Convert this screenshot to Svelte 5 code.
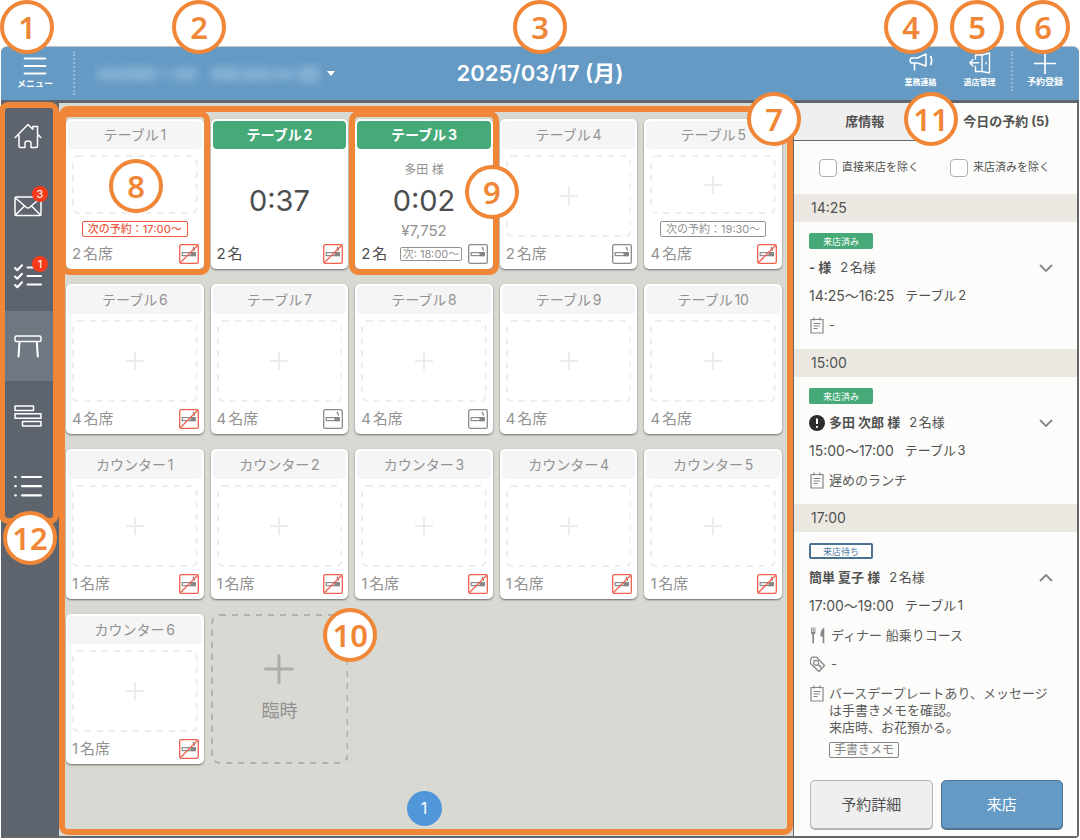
<script>
  const seats = [
    { name: 'テーブル1', label: '2名席', smoke: 'no', next: '次の予約：17:00〜', urgent: true, mark: 8 },
    { name: 'テーブル2', label: '2名', smoke: 'no', time: '0:37' },
    { name: 'テーブル3', label: '2名', smoke: 'yes', time: '0:02', guest: '多田 様', price: '¥7,752', after: '次: 18:00〜', mark: 9 },
    { name: 'テーブル4', label: '2名席', smoke: 'yes' },
    { name: 'テーブル5', label: '4名席', smoke: 'no', next: '次の予約：19:30〜' },
    { name: 'テーブル6', label: '4名席', smoke: 'no' },
    { name: 'テーブル7', label: '4名席', smoke: 'yes' },
    { name: 'テーブル8', label: '4名席', smoke: 'yes' },
    { name: 'テーブル9', label: '4名席' },
    { name: 'テーブル10', label: '4名席' },
    { name: 'カウンター1', label: '1名席', smoke: 'no' },
    { name: 'カウンター2', label: '1名席', smoke: 'no' },
    { name: 'カウンター3', label: '1名席', smoke: 'no' },
    { name: 'カウンター4', label: '1名席', smoke: 'no' },
    { name: 'カウンター5', label: '1名席', smoke: 'no' },
    { name: 'カウンター6', label: '1名席', smoke: 'no' }
  ];

  const bookings = [
    { at: '14:25', status: '来店済み', done: true, name: '- 様', party: '2名様', span: '14:25〜16:25', seat: 'テーブル2', memo: ['-'] },
    { at: '15:00', status: '来店済み', done: true, alert: true, name: '多田 次郎 様', party: '2名様', span: '15:00〜17:00', seat: 'テーブル3', memo: ['遅めのランチ'] },
    {
      at: '17:00', status: '来店待ち', open: true, name: '簡単 夏子 様', party: '2名様', span: '17:00〜19:00', seat: 'テーブル1',
      course: 'ディナー 船乗りコース', tag: '-',
      memo: ['バースデープレートあり、メッセージは手書きメモを確認。', '来店時、お花預かる。'], note: '手書きメモ'
    }
  ];

  const nav = [
    { icon: 'home' },
    { icon: 'mail', count: 3 },
    { icon: 'tasks', count: 1 },
    { icon: 'table', active: true },
    { icon: 'timeline' },
    { icon: 'list' }
  ];
</script>

{#snippet mark(n, cls)}
  <span class="mark {cls}">{n}</span>
{/snippet}

{#snippet smokeIcon(kind)}
  <svg class="smoke" viewBox="0 0 20 20" fill="none">
    <rect x="3.2" y="8.6" width="13" height="3" stroke="#8b8b8b" stroke-width="1.2" />
    <rect x="11.5" y="8" width="5.3" height="4.2" fill="#858585" />
    <path d="M14.9 2.9c-1 .8-.8 1.3 0 1.8s.6 1.3.1 2" stroke="#858585" stroke-width="1.2" />
    {#if kind === 'no'}
      <path d="M1 19 19 1" stroke="#f0604d" stroke-width="1.3" />
    {/if}
    <rect x=".7" y=".7" width="18.6" height="18.6" rx="1.6" stroke={kind === 'no' ? '#f0604d' : '#8b8b8b'} stroke-width="1.3" />
  </svg>
{/snippet}

{#snippet noteIcon()}
  <svg class="ic" viewBox="0 0 16 17" fill="none" stroke="#858585">
    <path d="M2 2.5h12v13.500H2zM5 .5v3M11 .5v3M4.500 6.500h7M4.500 9h6.500M4.500 11.500h4" stroke-width="1.200" />
  </svg>
{/snippet}

<div class="page">
  <div class="app">
    <header>
      <div class="left">
        <button class="menu">
          <svg width="24" height="19" viewBox="0 0 24 19"><path d="M1.500 1.500h21M1.500 9h21M1.500 16.500h21" stroke="#fff" stroke-width="1.800" stroke-linecap="round" /></svg>
          <span>メニュー</span>
        </button>
        <button class="store" aria-label="店舗">
          <svg width="230" height="24" viewBox="0 0 230 24">
            <defs><filter id="soft" x="-10%" y="-60%" width="120%" height="220%"><feGaussianBlur stdDeviation="4" /></filter></defs>
            <g filter="url(#soft)" fill="#93bbda" opacity=".7">
              <rect x="4" y="6" width="26" height="12" /><rect x="31" y="5" width="32" height="14" />
              <rect x="68" y="9" width="8" height="7" /><rect x="80" y="6" width="24" height="12" />
              <rect x="118" y="5" width="28" height="14" /><rect x="148" y="6" width="28" height="13" />
              <rect x="178" y="7" width="24" height="10" /><rect x="206" y="4" width="20" height="17" />
            </g>
          </svg>
          <svg width="8" height="5" viewBox="0 0 8 5"><path d="M0 0h8L4 5z" fill="#fff" /></svg>
        </button>
      </div>
      <h1>2025/03/17 (月)</h1>
      <div class="right">
        <button class="tool">
          <svg width="24" height="22" viewBox="0 0 24 22" fill="none" stroke="#fff" stroke-width="1.500" stroke-linejoin="round" stroke-linecap="round">
            <path d="M2 6h6.500L17 2v12L8.500 11H2L.9 8.500zM5.500 11v7" />
            <path d="M21.800 4.500c1 2.500 1 5.500 0 8" stroke-width="1.800" />
          </svg>
          <span>業務連絡</span>
        </button>
        <button class="tool exit">
          <svg width="24" height="22" viewBox="0 0 24 22" fill="none" stroke="#fff" stroke-width="1.400" stroke-linejoin="round" stroke-linecap="round">
            <path d="M14 3 21.500 1v20L14 19.500zM14 3H7.500v4M7.500 14.500v5H14M10.500 10.700H2M5 7.500 1.800 10.700 5 13.900M18 10.500v1.200" />
          </svg>
          <span>退店管理</span>
        </button>
        <button class="tool add">
          <svg width="24" height="22" viewBox="0 0 24 22"><path d="M1 11.500h22M12 0v22" stroke="#fff" stroke-width="1.700" /></svg>
          <span>予約登録</span>
        </button>
      </div>
      {@render mark(1, 'm1')}
      {@render mark(2, 'm2')}
      {@render mark(3, 'm3')}
      {@render mark(4, 'm4')}
      {@render mark(5, 'm5')}
      {@render mark(6, 'm6')}
    </header>

    <div class="body">
      <aside>
        <nav>
          {#each nav as item}
            <a href="#{item.icon}" class:active={item.active} aria-label={item.icon}>
              <svg width="28" height="28" viewBox="0 0 28 28" fill="none" stroke="#fff" stroke-width="1.500" stroke-linejoin="round" stroke-linecap="round">
                {#if item.icon === 'home'}
                  <path d="M1.200 15.500 14 2.500l4.800 4.700V4.500h4.700v7.500l3.300 3.500M5 13.500V24q0 1.500 1.500 1.500H11v-4.500q0-2 3-2t3 2v4.500h5q1.500 0 1.500-1.500V13.500" />
                {:else if item.icon === 'mail'}
                  <rect x="1" y="5" width="26" height="18.500" rx="1.200" />
                  <path d="M1.500 6 12.500 15.500q1.500 1.200 3 0l11-9.500M1.500 23 10.500 14M26.500 23 17.500 14" />
                {:else if item.icon === 'tasks'}
                  <path d="m1 6 2.300 2.300 4.700-5M1 14.500l2.300 2.300 4.700-5M1 23l2.300 2.300 4.700-5" stroke-width="2" />
                  <path d="M13.500 5.500h13.500M13.500 14h13.500M13.500 22.500h13.500" stroke-width="2" />
                {:else if item.icon === 'table'}
                  <rect x="1" y="4" width="26" height="5.500" rx="1.500" />
                  <path d="M5.500 10 4.500 24.500M22.800 10l1 14.500" stroke-width="2" />
                {:else if item.icon === 'timeline'}
                  <path d="M1 4h18.500v4.500H1zM1 11.700h26v4.500H1zM8.500 19.500H27V24H8.500z" />
                {:else}
                  <path d="M8 5h19M8 14.200h19M8 23.300h19M1.200 5h.600M1.200 14.200h.600M1.200 23.300h.600" stroke-width="2.200" />
                {/if}
              </svg>
              {#if item.count}<span class="count">{item.count}</span>{/if}
            </a>
          {/each}
          <span class="frame nav-frame"></span>
          {@render mark(12, 'm12')}
        </nav>
      </aside>

      <main>
        <div class="grid">
          {#each seats as s}
            <article class:busy={s.time}>
              <h2>{s.name}</h2>
              {#if s.time}
                <div class="using">
                  <span class="guest">{s.guest ?? ''}</span>
                  <span class="timer">{s.time}</span>
                  <span class="price">{s.price ?? ''}</span>
                </div>
              {:else}
                <button class="slot" aria-label="{s.name}に案内">
                  <svg class="dash"><rect x="1" y="1" rx="5" /></svg>
                  {#if s.mark !== 8}
                    <svg class="plus" viewBox="0 0 18 18"><path d="M9 0v18M0 9h18" /></svg>
                  {/if}
                </button>
                {#if s.next}<span class="next" class:urgent={s.urgent}>{s.next}</span>{/if}
              {/if}
              <footer>
                <span class="cap">{s.label}</span>
                {#if s.after}<span class="after">{s.after}</span>{/if}
                {#if s.smoke}{@render smokeIcon(s.smoke)}{/if}
              </footer>
              {#if s.mark}
                <span class="frame card-frame"></span>
                {@render mark(s.mark, 'm' + s.mark)}
              {/if}
            </article>
          {/each}
          <button class="extra">
            <svg class="dash"><rect x="1" y="1" rx="8" /></svg>
            <svg width="30" height="30" viewBox="0 0 30 30"><path d="M15 1.500v27M1.500 15h27" stroke="#adadab" stroke-width="3" stroke-linecap="round" /></svg>
            <span>臨時</span>
            {@render mark(10, 'm10')}
          </button>
        </div>
        <button class="pager">1</button>
        <span class="frame main-frame"></span>
        {@render mark(7, 'm7')}
      </main>

      <section class="panel">
        <div class="tabs">
          <button>席情報</button>
          <button class="on">今日の予約 (5)</button>
          {@render mark(11, 'm11')}
        </div>
        <div class="filters">
          <label><input type="checkbox" />直接来店を除く</label>
          <label><input type="checkbox" />来店済みを除く</label>
        </div>
        {#each bookings as b}
          <h3>{b.at}</h3>
          <div class="entry">
            <span class="status" class:done={b.done}>{b.status}</span>
            <div class="who">
              {#if b.alert}
                <svg width="16" height="16" viewBox="0 0 16 16"><circle cx="8" cy="8" r="8" fill="#2d2d2d" /><path d="M8 3.500v5.500M8 11v1.800" stroke="#fff" stroke-width="2" /></svg>
              {/if}
              <strong>{b.name}</strong>
              <span>{b.party}</span>
              <button class="fold" aria-label={b.open ? '閉じる' : '開く'}>
                <svg width="14" height="8" viewBox="0 0 14 8" fill="none" stroke="#858585" stroke-width="1.800"><path d={b.open ? 'M1 7l6-6 6 6' : 'M1 1l6 6 6-6'} /></svg>
              </button>
            </div>
            <div class="when"><span class="span">{b.span}</span><span>{b.seat}</span></div>
            {#if b.course}
              <div class="line wide">
                <svg class="ic" viewBox="0 0 16 17" fill="#858585">
                  <path d="M2 .500h.900v4.500h.800V.500h1v4.500h.800V.500h.900v5q0 1.500-1.400 2v8.700H3.400V7.500Q2 7 2 5.500zM15.300.500v15.700h-1.600v-6.700h-2.300q-.200-7 3.900-9z" />
                </svg>
                <span>{b.course}</span>
              </div>
              <div class="line wide">
                <svg class="ic" viewBox="0 0 16 17" fill="none" stroke="#858585" stroke-width="1.200" stroke-linejoin="round">
                  <path d="M1.500 3.500 3 1.200 7.500 1l8 8.500-5.500 6-8.500-8z" /><circle cx="7.200" cy="6.800" r="2.500" /><path d="m9 8.600 3.400 3.400M10.700 10.300l1.200-1.200M4 3.600l.6.6" />
                </svg>
                <span>{b.tag}</span>
              </div>
            {/if}
            <div class="line">
              {@render noteIcon()}
              <div class="memo">
                {#each b.memo as m}<p>{m}</p>{/each}
                {#if b.note}<button class="note">{b.note}</button>{/if}
              </div>
            </div>
          </div>
        {/each}
        <div class="actions">
          <button>予約詳細</button>
          <button class="primary">来店</button>
        </div>
      </section>
    </div>
  </div>
</div>

<style>
  :global(body) {
    background: #fff;
  }
  .page, .page * {
    box-sizing: border-box;
  }
  .page {
    display: flex;
    flex-direction: column;
    min-height: 100vh;
    padding: 46px 1px 2px;
    font-family: Inter, "Noto Sans CJK JP", sans-serif;
    font-size: 13px;
    line-height: 17px;
    color: #525252;
    text-autospace: normal;
  }
  button {
    font: inherit;
    color: inherit;
    background: none;
    border: 0;
    padding: 0;
    margin: 0;
  }
  h1, h2, h3, p {
    margin: 0;
  }
  svg {
    display: block;
    flex: none;
  }

  .app {
    flex: 1;
    display: flex;
    flex-direction: column;
  }
  header {
    position: relative;
    z-index: 2;
    display: grid;
    grid-template-columns: 1fr auto 1fr;
    align-items: start;
    height: 57px;
    background: #649ac4;
    border-top: 1px solid #c4c4c4;
    border-bottom: 3px solid #5f666e;
    border-radius: 6px 6px 0 0;
    color: #fff;
  }
  .left, .right {
    display: flex;
  }
  .right {
    justify-content: flex-end;
    padding: 4px 2px 0 0;
  }
  .menu {
    display: flex;
    flex-direction: column;
    align-items: center;
    gap: 3px;
    width: 74px;
    height: 44px;
    margin-top: 4px;
    padding: 6px 4px 0 0;
    border-right: 2px dotted #93b9d6;
    font-size: 9px;
    font-weight: 600;
    line-height: 10px;
  }
  .store {
    display: flex;
    align-items: center;
    gap: 4px;
    height: 53px;
    padding-left: 18px;
  }
  h1 {
    font-size: 22px;
    font-weight: 600;
    line-height: 53px;
  }
  .tool {
    display: flex;
    flex-direction: column;
    align-items: center;
    gap: 3px;
    width: 59px;
    height: 40px;
    padding-top: 1px;
    font-size: 8px;
    font-weight: 700;
    line-height: 10px;
    white-space: nowrap;
  }
  .exit {
    margin-right: 2px;
  }
  .add {
    width: 66px;
    border-left: 2px dotted #93b9d6;
    font-size: 9px;
  }

  .mark {
    position: absolute;
    z-index: 5;
    display: flex;
    align-items: center;
    justify-content: center;
    width: 54px;
    height: 54px;
    border: 4px solid #f08637;
    border-radius: 50%;
    background: #fff;
    color: #f08637;
    font-family: "Noto Sans", sans-serif;
    font-size: 31px;
    font-weight: 600;
    line-height: 44px;
  }
  .m1, .m2, .m3, .m4, .m5, .m6 { top: -47px; }
  .m1 { left: -1px; }
  .m2 { left: 171px; }
  .m3 { left: calc(50% - 27px); }
  .m4 { right: 141px; }
  .m5 { right: 75px; }
  .m6 { right: 9px; }
  .m7 { top: -11px; right: -8px; }
  .m8 { top: 40px; left: 43px; }
  .m9 { top: 46px; right: -26px; }
  .m10 { top: -6px; right: -29px; }
  .m11 { top: -11px; right: 119px; }
  .m12 { bottom: -44px; left: 2px; }

  .frame {
    position: absolute;
    z-index: 3;
    border: 6px solid #f08637;
    border-radius: 9px;
    pointer-events: none;
  }
  .nav-frame { inset: 1px 0 -3px -2px; }
  .main-frame { inset: 3px 0 1px 0; }
  .card-frame { inset: -8px -6px -6px -6px; }

  .body {
    flex: 1;
    display: flex;
    border-right: 2px solid #666;
    border-bottom: 2px solid #666;
    border-radius: 0 0 4px 0;
  }
  aside {
    width: 58px;
    background: #5d646e;
  }
  nav {
    position: relative;
    z-index: 3;
    margin-top: -2px;
  }
  nav a {
    position: relative;
    display: flex;
    align-items: center;
    height: 70px;
    padding-left: 13px;
  }
  nav a.active {
    background: #6f7780;
  }
  .count {
    position: absolute;
    top: 15px;
    left: 31px;
    width: 16px;
    height: 16px;
    border-radius: 50%;
    background: #f63b1b;
    color: #fff;
    font-size: 11px;
    line-height: 16px;
    text-align: center;
  }

  main {
    position: relative;
    flex: 1;
    display: flex;
    flex-direction: column;
    justify-content: space-between;
    align-items: center;
    padding: 16px 11px 10px 7px;
    background: #d8d9d3;
  }
  .grid {
    width: 100%;
    display: grid;
    grid-template-columns: repeat(5, 1fr);
    grid-auto-rows: 150px;
    gap: 15px 7px;
  }
  article {
    position: relative;
    display: flex;
    flex-direction: column;
    padding: 2px 2px 5px;
    border-radius: 5px;
    background: #fff;
    box-shadow: 0 1px 2px rgba(0, 0, 0, 0.5);
    color: #929292;
  }
  h2 {
    border-radius: 4px;
    background: #f5f5f5;
    font-size: 14px;
    font-weight: 400;
    line-height: 28px;
    text-align: center;
  }
  .busy h2 {
    background: #45aa78;
    color: #fff;
    font-weight: 700;
  }
  .slot {
    position: relative;
    flex: 1;
    display: flex;
    align-items: center;
    justify-content: center;
    margin: 6px 4px 7px;
  }
  .dash {
    position: absolute;
    inset: 0;
    width: 100%;
    height: 100%;
  }
  .dash rect {
    width: calc(100% - 2px);
    height: calc(100% - 2px);
    fill: none;
    stroke: #ededed;
    stroke-width: 2px;
    stroke-dasharray: 6 6;
  }
  .plus {
    width: 18px;
    height: 18px;
    stroke: #ececec;
    stroke-width: 2px;
  }
  .next {
    align-self: center;
    margin-bottom: 7px;
    padding: 0 5px;
    border: 1px solid #929292;
    border-radius: 2px;
    font-size: 11px;
    line-height: 14px;
    white-space: nowrap;
  }
  .urgent {
    border-color: #ee5b45;
    color: #ee5b45;
    font-weight: 500;
  }
  .using {
    flex: 1;
    display: flex;
    flex-direction: column;
    align-items: center;
    padding-top: 11px;
  }
  .guest {
    height: 20px;
    font-size: 12px;
    line-height: 20px;
  }
  .timer {
    color: #4d4d4d;
    font-size: 29px;
    line-height: 42px;
  }
  .price {
    font-size: 15px;
    line-height: 17px;
  }
  footer {
    display: flex;
    align-items: center;
    justify-content: space-between;
    height: 20px;
    padding: 0 3px 0 4px;
    font-size: 15px;
    line-height: 20px;
  }
  .busy .cap {
    color: #4d4d4d;
  }
  .after {
    margin-left: 7px;
    padding: 0 2px;
    border: 1px solid #929292;
    border-radius: 2px;
    font-size: 11px;
    line-height: 12px;
    white-space: nowrap;
  }
  .smoke {
    width: 20px;
    height: 20px;
  }
  .extra {
    position: relative;
    display: flex;
    flex-direction: column;
    align-items: center;
    gap: 15px;
    padding-top: 40px;
    color: #929292;
    font-size: 18px;
    line-height: 24px;
  }
  .extra .dash rect {
    stroke: #b0b0ae;
    stroke-dasharray: 6 6;
  }
  .pager {
    width: 35px;
    height: 35px;
    border-radius: 50%;
    background: #5097d9;
    color: #fff;
    font-size: 16px;
  }

  .panel {
    display: flex;
    flex-direction: column;
    width: 284px;
    border-left: 1px solid #666;
    background: #fcfcfa;
  }
  .tabs {
    position: relative;
    display: flex;
    height: 38px;
  }
  .tabs button {
    flex: 1;
    border-bottom: 1px solid #666;
    background: #efefef;
    font-size: 13px;
    font-weight: 700;
  }
  .tabs .on {
    border-bottom-color: #fcfcfa;
    background: #fcfcfa;
  }
  .filters {
    display: flex;
    align-items: center;
    gap: 31px;
    height: 53px;
    padding-left: 25px;
    font-size: 11px;
  }
  .filters label {
    display: flex;
    align-items: center;
    gap: 5px;
    white-space: nowrap;
  }
  input {
    appearance: none;
    width: 18px;
    height: 18px;
    margin: 0;
    border: 1px solid #b0b0b0;
    border-radius: 4px;
    background: #fff;
  }
  h3 {
    padding-left: 17px;
    background: #eae8e1;
    font-size: 14px;
    font-weight: 400;
    line-height: 28px;
  }
  .entry {
    padding: 11px 15px 15px;
  }
  .status {
    display: block;
    width: 64px;
    height: 16px;
    border: 2px solid #4c7291;
    border-radius: 2px;
    background: #fff;
    color: #4f7da3;
    font-size: 9px;
    line-height: 14px;
    text-align: center;
  }
  .done {
    border-color: #45aa78;
    background: #45aa78;
    color: #fff;
  }
  .who {
    display: flex;
    align-items: center;
    gap: 4px;
    margin-top: 10px;
  }
  .who strong {
    margin-right: 5px;
  }
  .fold {
    margin: 0 9px 0 auto;
  }
  .when {
    display: flex;
    gap: 11px;
    margin: 11px 0 13px;
  }
  .span {
    font-size: 14px;
  }
  .line {
    display: flex;
    gap: 4px;
    color: #5c5c5c;
  }
  .ic {
    width: 16px;
    height: 17px;
  }
  .wide {
    gap: 6px;
    margin-bottom: 12px;
  }
  .memo {
    padding-right: 8px;
  }
  .note {
    display: block;
    margin-top: 6px;
    padding: 0 4px;
    border: 1px solid #858585;
    border-radius: 2px;
    color: #858585;
    font-size: 12px;
    line-height: 14px;
  }
  .actions {
    display: flex;
    gap: 8px;
    margin-top: auto;
    padding: 0 14px 7px 16px;
  }
  .actions button {
    flex: 1;
    height: 49px;
    border: 1px solid #b5b5b5;
    border-radius: 5px;
    background: #efefef;
    font-size: 15px;
    box-shadow: 0 1px 0 #b5b5b5;
  }
  .actions .primary {
    border-color: #4f7391;
    background: #649ac4;
    box-shadow: 0 1px 0 #4f7391;
    color: #fff;
  }
</style>
